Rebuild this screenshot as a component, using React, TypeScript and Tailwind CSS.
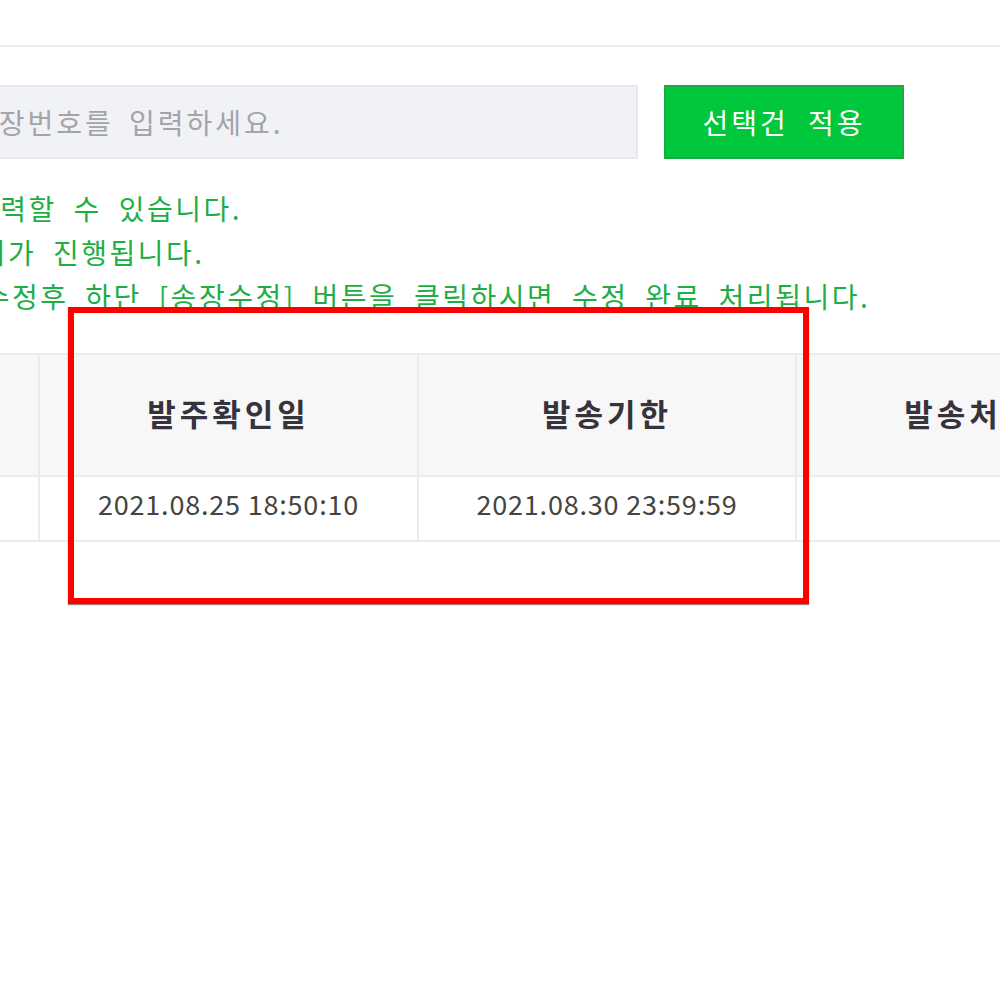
import React from 'react';

const notes = [
  { text: '송장번호를 입력할 수 있습니다.', shift: '-ml-[186px]' },
  { text: '발송처리가 진행됩니다.', shift: '-ml-[105px]' },
  { text: '송장번호 수정후 하단 [송장수정] 버튼을 클릭하시면 수정 완료 처리됩니다.', shift: '-ml-[146px]' },
];

export default function App() {
  return (
    <div className="relative w-[1000px] h-[997px] overflow-hidden bg-white font-['Noto_Sans_CJK_KR',sans-serif]">
      {/* top divider */}
      <div className="h-[47px] border-b-2 border-[#eeeef2]" />

      {/* invoice input + apply */}
      <div className="mt-[38px] flex h-[74px] text-[28px] tracking-[3px]">
        <div className="w-[640px] -ml-[2px] flex items-center overflow-hidden bg-[#f1f2f6] border-2 border-[#e7e8ec]">
          <span className="-ml-[30px] whitespace-nowrap text-[#a3a3a8] [word-spacing:6px]">송장번호를 입력하세요.</span>
        </div>
        <button className="ml-[26px] w-[240px] bg-[#00c73c] border-2 border-[#1ba844] text-white [word-spacing:10px]">
          선택건 적용
        </button>
      </div>

      {/* guide text */}
      <div className="mt-[27px] text-[28px] leading-[44px] tracking-[2.5px] [word-spacing:8px] text-[#1fae44]">
        {notes.map((n) => (
          <div key={n.text} className={`whitespace-nowrap ${n.shift}`}>{n.text}</div>
        ))}
      </div>

      {/* order table */}
      <div className="mt-[35px] w-[1110px]">
        <div className="grid grid-cols-[40px_379px_378px_312px] h-[124px] bg-[#f7f7f8] border-y-2 border-[#ececec] text-[31px] font-bold tracking-[4px] text-[#37333c]">
          <div className="border-r-2 border-[#ececec]" />
          <div className="flex items-center justify-center pb-[4px] border-r-2 border-[#ececec]">발주확인일</div>
          <div className="flex items-center justify-center pb-[4px] border-r-2 border-[#ececec]">발송기한</div>
          <div className="flex items-center justify-center pb-[4px]">발송처</div>
        </div>
        <div className="grid grid-cols-[40px_379px_378px_312px] h-[65px] border-b-2 border-[#ececec] text-[27px] tracking-[0.8px] text-[#444]">
          <div className="border-r-2 border-[#ececec]" />
          <div className="flex items-center justify-center pb-[8px] border-r-2 border-[#ececec]">2021.08.25 18:50:10</div>
          <div className="flex items-center justify-center pb-[8px] border-r-2 border-[#ececec]">2021.08.30 23:59:59</div>
          <div />
        </div>
      </div>

      {/* highlight annotation */}
      <div className="absolute left-[68px] top-[307px] w-[741px] h-[297px] border-[6px] border-[#ff0000] shadow-[0_1px_1px_rgba(80,0,0,0.5)]" />
    </div>
  );
}
